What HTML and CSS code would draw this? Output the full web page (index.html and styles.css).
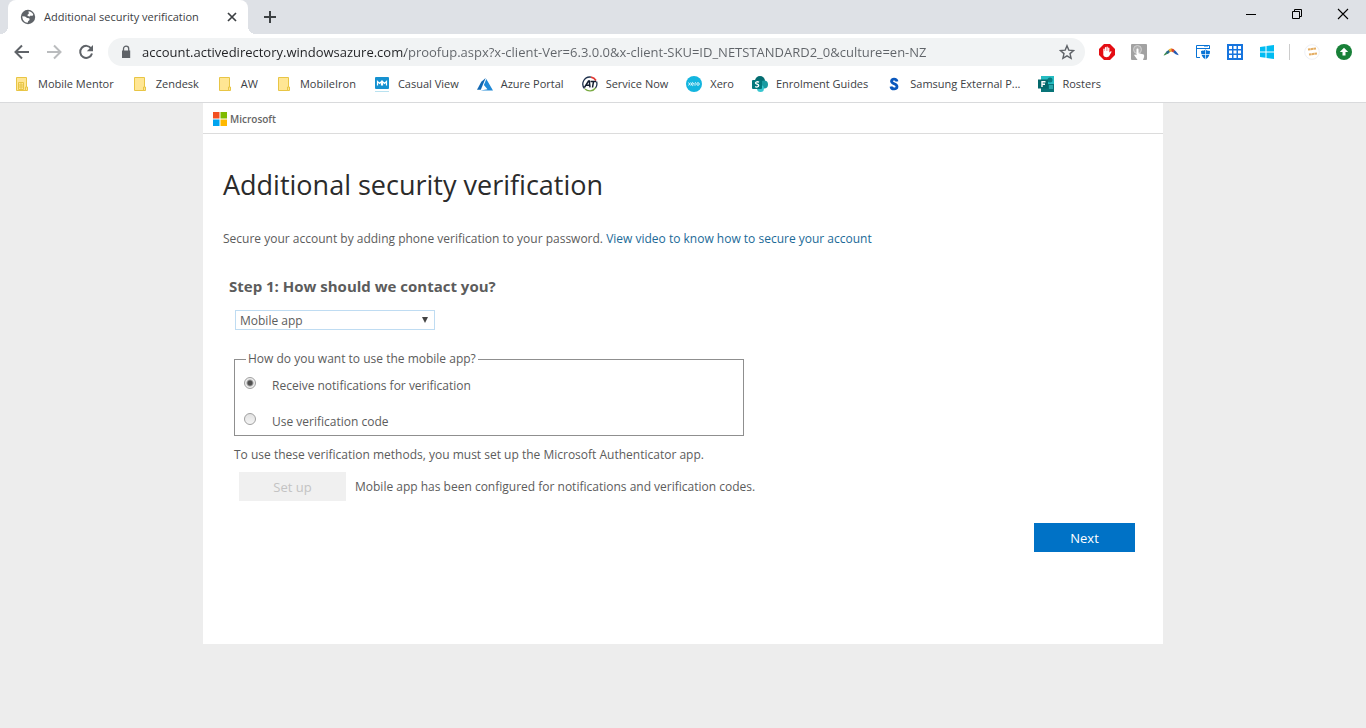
FILE: index.html
```html
<!DOCTYPE html>
<html lang="en">
<head>
<meta charset="utf-8">
<title>Additional security verification</title>
<link rel="stylesheet" href="styles.css">
</head>
<body>
<header class="browser">
  <div class="tab-strip">
    <div class="tab">
      <svg class="icon16" viewBox="0 0 16 16"><circle cx="8" cy="8" r="7.200" fill="#5f6368"/><path d="M8.500 2.300c2 .1 4 1.500 4.800 3.300l-1 1.300-1.600-.3-1 .9-1.800-.6-.6-1 1.500-1.200zM2.300 7.300l2.800.3 2 1.500 2.200.2.300 1.700-1.500 1.300-.4 1.500C4.700 13.700 2.200 11 2.300 7.300z" fill="#fff"/></svg>
      <span class="tab-title">Additional security verification</span>
      <button class="plain" aria-label="Close tab"><svg class="icon16" viewBox="0 0 16 16"><path d="M4 4l8 8M12 4l-8 8" stroke="#3c4043" stroke-width="1.700"/></svg></button>
    </div>
    <button class="plain new-tab" aria-label="New tab"><svg class="icon16" viewBox="0 0 16 16"><path d="M8 2v12M2 8h12" stroke="#3c4043" stroke-width="2"/></svg></button>
    <div class="window-controls">
      <button class="plain" aria-label="Minimize"><svg class="icon16" viewBox="0 0 16 16"><path d="M3 8.500h10" stroke="#000"/></svg></button>
      <button class="plain" aria-label="Restore"><svg class="icon16" viewBox="0 0 16 16"><path d="M3.500 5.500h7v7h-7zM5.500 5.500v-2h7v7h-2" fill="none" stroke="#000"/></svg></button>
      <button class="plain" aria-label="Close"><svg class="icon16" viewBox="0 0 16 16"><path d="M3 3l10 10M13 3L3 13" stroke="#000" stroke-width="1.100"/></svg></button>
    </div>
  </div>
  <div class="toolbar">
    <nav class="nav-buttons" aria-label="History">
      <button class="plain" aria-label="Back"><svg class="icon16" viewBox="0 0 16 16"><path d="M15 8H2M8 1.500L1.500 8 8 14.500" fill="none" stroke="#5f6368" stroke-width="2"/></svg></button>
      <button class="plain" aria-label="Forward"><svg class="icon16" viewBox="0 0 16 16"><path d="M1 8h13M8 1.500L14.500 8 8 14.500" fill="none" stroke="#babcbe" stroke-width="2"/></svg></button>
      <button class="plain" aria-label="Reload"><svg class="icon16" viewBox="0 0 16 16"><path d="M13.200 4.500A6 6 0 1 0 14 9.500" fill="none" stroke="#5f6368" stroke-width="2"/><path d="M15 1v6.200H8.800z" fill="#5f6368"/></svg></button>
    </nav>
    <div class="omnibox">
      <svg class="icon16" viewBox="0 0 16 16"><path d="M4 6.500h8.200V14H4z" fill="#5f6368"/><path d="M5.500 7V4.700a2.600 2.600 0 0 1 5.200 0V7" fill="none" stroke="#5f6368" stroke-width="1.300"/></svg>
      <input class="address" type="text" aria-label="Address" value="account.activedirectory.windowsazure.com/proofup.aspx?x-client-Ver=6.3.0.0&amp;x-client-SKU=ID_NETSTANDARD2_0&amp;culture=en-NZ">
      <button class="plain" aria-label="Bookmark this page"><svg class="icon16" viewBox="0 0 16 16"><path d="M8 1.700l1.800 4.400 4.800.4-3.600 3.100 1.100 4.700L8 11.800l-4.100 2.500L5 9.600 1.400 6.500l4.800-.4z" fill="none" stroke="#5f6368" stroke-width="1.400"/></svg></button>
    </div>
    <div class="extensions">
      <button class="plain" aria-label="Ad blocker"><svg class="icon16" viewBox="0 0 16 16"><path d="M5 0h6l5 5v6l-5 5H5l-5-5V5z" fill="#e40d13"/><path d="M4.300 8.500V5c0-.8 1.300-.8 1.300 0v2h.3V3.600c0-.8 1.300-.8 1.300 0V7h.3V3.200c0-.8 1.300-.8 1.300 0V7h.3V4c0-.8 1.300-.8 1.300 0v4.500l1-1c.7-.6 1.400 0 1 .7l-2.200 3.900c-1 1.600-5.200 1.600-5.900-1.100z" fill="#fff"/></svg></button>
      <button class="plain" aria-label="Click tool"><svg class="icon16" viewBox="0 0 16 16"><rect width="16" height="16" rx="1" fill="#a2a2a2"/><circle cx="6.500" cy="5.500" r="4" fill="#b0b0b0" stroke="#d2d2d2"/><path d="M5.500 5.500c0-1.400 2-1.400 2 0v3.800l4.500.9c1.200.3 1.300 1.200 1.100 2.500L12 16H6.600L3.200 11.300c0-1.200 1.500-1 2.300 0z" fill="#fff"/></svg></button>
      <button class="plain" aria-label="Arc"><svg class="icon16" viewBox="0 0 16 16"><path d="M.5 11.500c1-2 2.300-3 4-4.500l1.500 2c-2 1.200-3.500 2.200-5.500 2.500z" fill="#438d52"/><path d="M3 8l3.500-2.700 1.300 2.200L4.500 10z" fill="#28688e"/><path d="M5.500 6c1-1.200 2-1.600 3.500-1.500v3L6.800 8z" fill="#f3b42c"/><path d="M8.500 4.500c1.600.1 2.500.8 3.500 2l-1.800 2-1.700-1z" fill="#d8442e"/><path d="M11.700 6.200c1.500 1.300 3 3 4 5-2.200-.5-4-1.500-5.500-3z" fill="#235bb3"/></svg></button>
      <button class="plain" aria-label="Security window"><svg class="icon16" viewBox="0 0 16 16"><path d="M5 13.500H1.500v-12h13V5M1.500 4.500h13" fill="none" stroke="#0873d5"/><path d="M10 1v2M12 1v2" stroke="#0873d5"/><path d="M10.500 5.500c1.700 1.200 3 1.400 4.500 1.400 0 4-1.400 6.800-4.500 8.300C7.400 13.700 6 10.900 6 6.900c1.500 0 2.800-.2 4.500-1.400z" fill="#0873d5"/><path d="M10.500 6v9M5.500 10.500H15" stroke="#fff" stroke-width=".7"/></svg></button>
      <button class="plain" aria-label="Grid"><svg class="icon16" viewBox="0 0 16 16"><path d="M0 0h16v16H0z" fill="#1574de"/><path d="M2 2h3v3H2zM6.500 2h3v3h-3zM11 2h3v3h-3zM2 6.500h3v3H2zM6.500 6.500h3v3h-3zM11 6.500h3v3h-3zM2 11h3v3H2zM6.500 11h3v3h-3zM11 11h3v3h-3z" fill="#fff"/></svg></button>
      <button class="plain" aria-label="Windows"><svg class="icon16" viewBox="0 0 16 16"><path d="M1 3l5.500-.8v5.300H1zM7.500 2L15 1v6.500H7.500zM1 8.500h5.500v5.300L1 13zM7.500 8.500H15V15l-7.500-1z" fill="#00bcf2"/></svg></button>
      <span class="divider"></span>
      <button class="plain" aria-label="Profile"><svg class="icon16" viewBox="0 0 16 16"><circle cx="8" cy="8" r="7.300" fill="#fff" stroke="#eef0f5"/><path d="M4 5.500l8-1M5 10.500l8-1" stroke="#e4ad62" stroke-width="2" stroke-dasharray="2.500 .3"/></svg></button>
      <button class="plain" aria-label="Update"><svg class="icon16" viewBox="0 0 16 16"><circle cx="8" cy="8" r="8" fill="#188038"/><path d="M8 3.700L3.800 8h2.700v3.500h3V8h2.700z" fill="#fff"/></svg></button>
    </div>
  </div>
  <nav class="bookmarks" aria-label="Bookmarks">
    <a class="bookmark" href="#"><svg class="icon16" viewBox="0 0 16 16"><path d="M2.500 1.500h10v13h-10z" fill="#ffe694" stroke="#e8c545"/><path d="M4.500 6.500h5v7h-5zM7 6.500v7M4.500 9h5M4.500 11h5" fill="none" stroke="#e8c545"/><path d="M11.500 11h2v3.500h-2z" fill="#ffe694" stroke="#e8c545"/></svg>Mobile Mentor</a>
    <a class="bookmark" href="#"><svg class="icon16" viewBox="0 0 16 16"><path d="M2.500 1.500h10v13h-10z" fill="#ffe694" stroke="#e8c545"/><path d="M11.500 11h2v3.500h-2z" fill="#ffe694" stroke="#e8c545"/></svg>Zendesk</a>
    <a class="bookmark" href="#"><svg class="icon16" viewBox="0 0 16 16"><path d="M2.500 1.500h10v13h-10z" fill="#ffe694" stroke="#e8c545"/><path d="M11.500 11h2v3.500h-2z" fill="#ffe694" stroke="#e8c545"/></svg>AW</a>
    <a class="bookmark" href="#"><svg class="icon16" viewBox="0 0 16 16"><path d="M2.500 1.500h10v13h-10z" fill="#ffe694" stroke="#e8c545"/><path d="M11.500 11h2v3.500h-2z" fill="#ffe694" stroke="#e8c545"/></svg>MobileIron</a>
    <a class="bookmark" href="#"><svg class="icon16" viewBox="0 0 16 16"><rect x="1" y="1" width="14" height="12" rx="1" fill="#1691d0"/><path d="M3.500 9.500v-4l2 2 2-2v4M8.500 9.500v-4l2 2 2-2v4" fill="none" stroke="#fff" stroke-width="1.200"/><path d="M1 15.500h14" stroke="#b9e2f0"/></svg>Casual View</a>
    <a class="bookmark" href="#"><svg class="icon16" viewBox="0 0 16 16"><path d="M8.700 2L4.300 5.800 0 13.700h3.800z" fill="#1268b3"/><path d="M9.300 3L16 14.500H3.500l7-1.300-3.600-4.300z" fill="#2189d6"/></svg>Azure Portal</a>
    <a class="bookmark" href="#"><svg class="icon16" viewBox="0 0 16 16"><path d="M2.500 12.500A7 7 0 0 1 9 1.100M14.500 5.500a7 7 0 0 1-1 6.500" fill="none" stroke="#20324d" stroke-width="1.300"/><path d="M9 1.100a7 7 0 0 1 5 3.400" fill="none" stroke="#e13a35" stroke-width="1.600"/><path d="M3 13c3 2.800 8 2.500 10.500-1" fill="none" stroke="#79aa42" stroke-width="1.300"/><path d="M2.500 11.300l4-6.300h.8l.7 6.300M4.300 9.300h3.500M8.500 5.500H14M11.500 5.500l-1 6" fill="none" stroke="#111c2e" stroke-width="1.500"/></svg>Service Now</a>
    <a class="bookmark" href="#"><svg class="icon16" viewBox="0 0 16 16"><circle cx="8" cy="8" r="8" fill="#13b5df"/><path d="M2.500 6.500l2 3M4.500 6.500l-2 3M5.500 8h2c0-2-2-2-2 0s1.500 1.800 2 1M9 9.800V7.200c0-.5.500-.8 1-.6" fill="none" stroke="#fff" stroke-width=".8"/><circle cx="12" cy="8" r="1.300" fill="none" stroke="#fff" stroke-width=".8"/></svg>Xero</a>
    <a class="bookmark" href="#"><svg class="icon16" viewBox="0 0 16 16"><circle cx="8" cy="5" r="5" fill="#036c70"/><circle cx="12" cy="8.500" r="4" fill="#1a9ba1"/><circle cx="8.500" cy="12.500" r="3.500" fill="#37c6d0"/><rect y="4" width="10" height="9" rx="1" fill="#03787c"/><path d="M7 6.300C5.700 5.300 3.500 5.700 3.500 7S6.700 8 6.700 9.500 4.500 11.500 3.200 10.500" fill="none" stroke="#fff" stroke-width="1.300"/></svg>Enrolment Guides</a>
    <a class="bookmark" href="#"><svg class="icon16" viewBox="0 0 16 16"><path d="M11 5.500C10.500 2.500 5.500 2.500 5.500 5.300S11 7.500 11 10.700 5.300 13.600 5 10.500" fill="none" stroke="#0b58bd" stroke-width="2.800"/></svg>Samsung External P...</a>
    <a class="bookmark" href="#"><svg class="icon16" viewBox="0 0 16 16"><path d="M3 0h13v16H3z" fill="#26bcc2"/><circle cx="12" cy="4" r="2.500" fill="#077c7f"/><path d="M3 8h13v8H3z" fill="#087478"/><path d="M11 9h4v4h-4z" fill="#27a7aa"/><path d="M0 3.500h10v9H0z" fill="#04686b"/><path d="M4 11V5.700h3.500M4 8.200h3" fill="none" stroke="#fff" stroke-width="1.400"/></svg>Rosters</a>
  </nav>
</header>
<main class="card">
  <div class="brand">
    <svg class="ms-logo" viewBox="0 0 14 14"><path d="M0 0h6.500v6.500H0z" fill="#f25022"/><path d="M7.500 0H14v6.500H7.500z" fill="#7fba00"/><path d="M0 7.500h6.500V14H0z" fill="#00a4ef"/><path d="M7.500 7.500H14V14H7.500z" fill="#ffb900"/></svg>
    <span>Microsoft</span>
  </div>
  <form class="content">
    <h1 class="title">Additional security verification</h1>
    <p class="intro">Secure your account by adding phone verification to your password. <a class="link" href="#">View video to know how to secure your account</a></p>
    <h2 class="step"><label for="method">Step 1: How should we contact you?</label></h2>
    <div class="options">
      <div class="select-wrap">
        <select class="method" id="method"><option>Mobile app</option></select>
        <svg class="arrow" viewBox="0 0 8 8"><path d="M1 1h6L4 7z" fill="#444"/></svg>
      </div>
      <fieldset class="usage">
        <legend>How do you want to use the mobile app?</legend>
        <div class="choice"><input class="radio" type="radio" name="usage" id="notify" checked><label for="notify">Receive notifications for verification</label></div>
        <div class="choice"><input class="radio" type="radio" name="usage" id="code"><label for="code">Use verification code</label></div>
      </fieldset>
      <p class="hint">To use these verification methods, you must set up the Microsoft Authenticator app.</p>
      <div class="setup-row">
        <button class="button setup" type="button" disabled>Set up</button>
        <span>Mobile app has been configured for notifications and verification codes.</span>
      </div>
    </div>
    <div class="actions"><button class="button next" type="button">Next</button></div>
  </form>
</main>
</body>
</html>
```
FILE: styles.css
```css
* { box-sizing: border-box; }
body {
  margin: 0;
  background: #ededed;
  color: #5c5c5c;
  font: 12px/16px "Open Sans", "Noto Sans", sans-serif;
}
.plain { display: flex; padding: 0; border: 0; background: none; }
.icon16 { display: block; flex: none; width: 16px; height: 16px; }

.browser { background: #fff; border-bottom: 1px solid #d9dadc; color: #3c4043; font: 11px/16px "Open Sans", "Noto Sans", sans-serif; }
.tab-strip { display: flex; align-items: center; height: 34px; padding: 0 15px 0 8px; background: #dee1e6; }
.tab {
  position: relative;
  display: flex;
  align-items: center;
  gap: 8px;
  width: 240px;
  height: 34px;
  padding: 0 8px 0 12px;
  border-radius: 8px 8px 0 0;
  background: #fff;
}
.tab::before, .tab::after { content: ""; position: absolute; bottom: 0; width: 8px; height: 8px; }
.tab::before { left: -8px; background: radial-gradient(circle at 0 0, #dee1e6 8px, #fff 8px); }
.tab::after { right: -8px; background: radial-gradient(circle at 100% 0, #dee1e6 8px, #fff 8px); }
.tab-title { flex: 1; white-space: nowrap; }
.new-tab { margin-left: 14px; }
.window-controls { display: flex; gap: 30px; margin-left: auto; padding-bottom: 6px; }

.toolbar { display: flex; align-items: center; height: 36px; padding: 0 14px; }
.nav-buttons { display: flex; gap: 16px; margin-right: 14px; }
.omnibox { display: flex; flex: 1; align-items: center; gap: 8px; height: 28px; padding: 0 10px; border-radius: 14px; background: #f1f3f4; }
.address {
  flex: 1;
  min-width: 0;
  padding: 0;
  border: 0;
  background: linear-gradient(90deg, #202124 263px, #5f6368 263px) text;
  color: transparent;
  font: 13px/20px "Open Sans", "Noto Sans", sans-serif;
}
.extensions { display: flex; align-items: center; gap: 16px; margin-left: 14px; }
.divider { width: 1px; height: 16px; margin: 0 -2px; background: #ccc; }

.bookmarks { display: flex; align-items: center; gap: 18px; height: 32px; padding: 0 14px 4px; }
.bookmark { display: flex; align-items: center; gap: 8px; color: #3c4043; text-decoration: none; white-space: nowrap; }

.card { max-width: 960px; min-height: 541px; margin: 0 auto; background: #fff; }
.brand { display: flex; align-items: center; gap: 3px; height: 31px; padding: 2px 10px 0; border-bottom: 1px solid #dcdcdc; color: #666; font-size: 10px; font-weight: 600; }
.ms-logo { width: 14px; height: 14px; }
.content { padding: 31px 28px 28px 20px; }
.title { margin: 0; color: #2b2b2b; font-size: 27px; font-weight: 400; line-height: 40px; }
.intro { margin: 26px 0 0; }
.link { color: #1b6a97; text-decoration: none; }
.step { margin: 29px 0 0 6px; font-size: 15px; font-weight: 700; line-height: 20px; }
.options { padding: 14px 0 0 11px; }
.select-wrap { position: relative; width: 200px; margin-left: 1px; }
.method {
  display: block;
  width: 100%;
  height: 20px;
  padding: 1px 4px 0;
  border: 1px solid #bfdcf2;
  border-radius: 0;
  appearance: none;
  background: #fff;
  color: #5c5c5c;
  font: 12px/18px "Open Sans", "Noto Sans", sans-serif;
}
.arrow { position: absolute; top: 6px; right: 6px; width: 8px; height: 8px; pointer-events: none; }
.usage { max-width: 510px; margin: 21px 0 0; padding: 10px 9px 4px; border: 1px solid #8f8f8f; }
.usage legend { margin-left: 2px; padding: 0 2px; line-height: 16px; }
.choice { display: flex; gap: 16px; line-height: 18px; }
.choice + .choice { margin-top: 18px; }
.radio {
  flex: none;
  width: 12px;
  height: 12px;
  margin: 0;
  border: 1px solid #a0a0a0;
  border-radius: 50%;
  appearance: none;
  background: linear-gradient(#e2e2e2, #f4f4f4);
}
.radio:checked { background: radial-gradient(circle, #505050 2px, #eee 4px); }
.hint { margin: 11px 0 0; }
.setup-row { display: flex; align-items: center; gap: 9px; margin: 9px 0 0 5px; }
.button { height: 29px; padding: 0; border: 0; font: 13px/20px "Open Sans", "Noto Sans", sans-serif; }
.setup { width: 107px; background: #f0f0f0; color: #c3c3c3; }
.next { width: 101px; background: #0072c6; color: #fff; }
.actions { display: flex; justify-content: flex-end; margin-top: 22px; }
```
